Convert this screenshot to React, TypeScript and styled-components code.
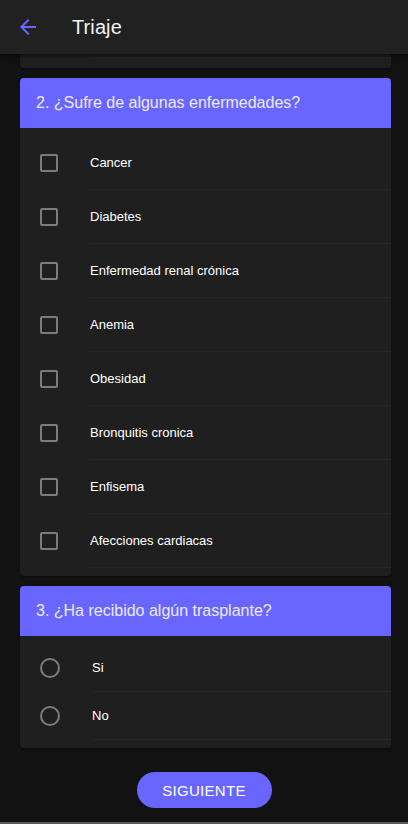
import React from "react";
import styled, { createGlobalStyle } from "styled-components";

const GlobalStyle = createGlobalStyle`
  html, body { margin: 0; padding: 0; background: #121212; }
  body { font-family: "Liberation Sans", Arial, sans-serif; color: #fff; }
  * { box-sizing: border-box; }
`;

const Page = styled.div`
  width: 408px;
  min-height: 824px;
  background: #121212;
  display: flex;
  flex-direction: column;
`;

const AppBar = styled.header`
  height: 54px;
  background: #212121;
  display: flex;
  align-items: center;
  padding-left: 16px;
  box-shadow: 0 2px 4px rgba(0, 0, 0, 0.5);
  position: relative;
  z-index: 1;
`;

const BackButton = styled.button`
  width: 24px;
  height: 24px;
  padding: 0;
  border: 0;
  background: transparent;
  color: #6966ff;
  display: flex;
  align-items: center;
  justify-content: center;
  cursor: pointer;
`;

const Title = styled.h1`
  margin: 0 0 0 32px;
  font-size: 20px;
  font-weight: 500;
  color: #f2f2f2;
  letter-spacing: 0.1px;
`;

const Content = styled.main`
  padding: 0 17px 0 20px;
  display: flex;
  flex-direction: column;
  gap: 10px;
`;

const Card = styled.section`
  background: #1f1f1f;
  border-radius: 4px;
  overflow: hidden;
  box-shadow: 0 1px 2px rgba(0, 0, 0, 0.4);
`;

const CardTail = styled(Card)`
  height: 14px;
  border-radius: 0 0 4px 4px;
  padding-left: 70px;
  padding-top: 3px;
`;

const CardHeader = styled.div`
  height: 50px;
  background: #6966ff;
  display: flex;
  align-items: center;
  padding-left: 16px;
  font-size: 16px;
  color: #eceaff;
`;

const List = styled.ul`
  list-style: none;
  margin: 0;
  padding: 8px 0;
`;

const Item = styled.li<{ $h: number }>`
  height: ${(p) => p.$h}px;
  display: flex;
  align-items: center;
  padding-left: 20px;
`;

const Control = styled.span<{ $w: number }>`
  width: ${(p) => p.$w}px;
  flex-shrink: 0;
  display: flex;
  align-items: center;
`;

const Box = styled.span`
  width: 18px;
  height: 18px;
  border: 2px solid #7c7c7c;
  border-radius: 2px;
`;

const Circle = styled.span`
  width: 20px;
  height: 20px;
  border: 2px solid #7c7c7c;
  border-radius: 50%;
`;

const Label = styled.span`
  flex: 1;
  height: 100%;
  display: flex;
  align-items: center;
  font-size: 13px;
  color: #ffffff;
  border-bottom: 1px solid #252525;
`;

const Divider = styled.div`
  height: 1px;
  background: #252525;
`;

const Actions = styled.div`
  display: flex;
  justify-content: center;
  padding-top: 24px;
`;

const NextButton = styled.button`
  width: 135px;
  height: 36px;
  border: 0;
  border-radius: 18px;
  background: #6966ff;
  color: #fff;
  font-family: "Liberation Sans", Arial, sans-serif;
  font-size: 15px;
  letter-spacing: 0.3px;
  text-transform: uppercase;
  cursor: pointer;
`;

const BottomEdge = styled.div`
  margin-top: 14px;
  height: 2px;
  background: #5a5a5a;
`;

const diseases = [
  "Cancer",
  "Diabetes",
  "Enfermedad renal crónica",
  "Anemia",
  "Obesidad",
  "Bronquitis cronica",
  "Enfisema",
  "Afecciones cardiacas",
];

const BackArrow = () => (
  <svg width="24" height="24" viewBox="0 0 24 24" fill="currentColor">
    <path d="M20 11H7.83l5.59-5.59L12 4l-8 8 8 8 1.41-1.41L7.83 13H20v-2z" />
  </svg>
);

export default function App() {
  return (
    <Page>
      <GlobalStyle />
      <AppBar>
        <BackButton aria-label="Volver">
          <BackArrow />
        </BackButton>
        <Title>Triaje</Title>
      </AppBar>
      <Content>
        <CardTail>
          <Divider />
        </CardTail>
        <Card>
          <CardHeader>2. ¿Sufre de algunas enfermedades?</CardHeader>
          <List>
            {diseases.map((d) => (
              <Item key={d} $h={54}>
                <Control $w={50}>
                  <Box />
                </Control>
                <Label>{d}</Label>
              </Item>
            ))}
          </List>
        </Card>
        <Card>
          <CardHeader>3. ¿Ha recibido algún trasplante?</CardHeader>
          <List>
            {["Si", "No"].map((o) => (
              <Item key={o} $h={48}>
                <Control $w={52}>
                  <Circle />
                </Control>
                <Label>{o}</Label>
              </Item>
            ))}
          </List>
        </Card>
      </Content>
      <Actions>
        <NextButton>Siguiente</NextButton>
      </Actions>
      <BottomEdge />
    </Page>
  );
}
